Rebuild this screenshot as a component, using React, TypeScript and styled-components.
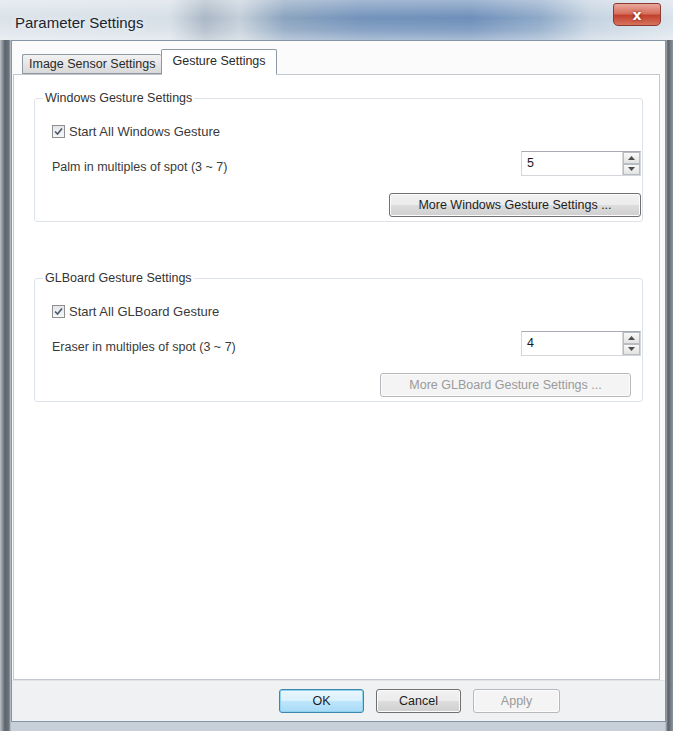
import React from 'react'
import styled, {createGlobalStyle} from 'styled-components'

const GlobalStyle = createGlobalStyle`
  html, body { margin: 0; padding: 0; }
  body {
    font-family: 'Liberation Sans', Arial, sans-serif;
    background: #6f757c;
  }
`;

const Window = styled.div`
  width: 673px;
  height: 731px;
  box-sizing: border-box;
  display: flex;
  flex-direction: column;
  padding: 0 7px 9px 11px;
  background:
    linear-gradient(180deg, rgba(255,255,255,0.35) 0px, rgba(255,255,255,0) 18px, rgba(255,255,255,0.15) 30px, rgba(255,255,255,0.4) 40px) top / 100% 40px no-repeat,
    linear-gradient(90deg, #dbe3ea 0px, #d6dfe7 170px, #aab8c6 205px, #c4cfda 240px, #8aa3bf 285px, #7393bb 360px, #6e8fba 470px, #8ea9c8 540px, #c4d2e0 590px, #d9e2ea 673px) top / 100% 40px no-repeat,
    linear-gradient(90deg, #b9c0c7 0px, #5d636a 5px, #6c737b 9px, #c7d0d9 11px, #c7d0d9 calc(100% - 8px), #5a6068 calc(100% - 5px), #8d949b 100%);
`;

const TitleBar = styled.div`
  flex: none;
  height: 40px;
  display: flex;
  justify-content: space-between;
  align-items: flex-start;
  padding: 0 5px 0 4px;
`;

const TitleText = styled.div`
  margin-top: 14px;
  font-size: 15px;
  line-height: 18px;
  color: #1c2430;
  text-shadow: 0 0 6px rgba(255,255,255,0.9);
`;

const CloseButton = styled.div`
  margin-top: 3px;
  width: 48px;
  height: 23px;
  box-sizing: border-box;
  border: 1px solid #8a3a32;
  border-radius: 3px 3px 5px 5px;
  background: linear-gradient(180deg, #e8a89c 0%, #d7705f 45%, #c2412e 55%, #d6735d 100%);
  display: flex;
  align-items: center;
  justify-content: center;
  color: #fff;
  font-size: 14px;
  font-weight: 700;
  font-family: 'DejaVu Sans', sans-serif;
  text-shadow: 0 0 3px #6b1b10;
`;

const Client = styled.div`
  flex: 1;
  display: flex;
  flex-direction: column;
  border: 1px solid #8595a8;
  background: #eff1f2;
`;

const TabArea = styled.div`
  flex: 1;
  display: flex;
  flex-direction: column;
  padding: 8px 5px 0 1px;
  background: #fbfbfb;
`;

const TabStrip = styled.div`
  display: flex;
  align-items: flex-end;
  padding-left: 9px;
  height: 25px;
  position: relative;
  z-index: 1;
`;

const Tab = styled.div<{$active?: boolean}>`
  box-sizing: border-box;
  height: ${p => (p.$active ? '26px' : '20px')};
  padding: ${p => (p.$active ? '4px 10px 0' : '2px 6px 0')};
  margin-bottom: ${p => (p.$active ? '-1px' : '0')};
  border: 1px solid #8e98a3;
  border-bottom: ${p => (p.$active ? '1px solid #fff' : '1px solid #8e98a3')};
  border-right: ${p => (p.$active ? '1px solid #8e98a3' : 'none')};
  border-radius: 2px 2px 0 0;
  background: ${p => (p.$active ? '#fff' : 'linear-gradient(180deg, #f2f2f2 0%, #e6e6e6 50%, #d9d9d9 100%)')};
  font-size: 12.5px;
  color: #2a2a2a;
  white-space: nowrap;
`;

const Panel = styled.div`
  flex: 1;
  background: #fff;
  border: 1px solid #c3c8ce;
  padding: 16px 16px 0 20px;
  display: flex;
  flex-direction: column;
  gap: 49px;
`;

const Group = styled.fieldset`
  margin: 0;
  padding: 17px 1px 4px 17px;
  border: 1px solid #dde3e8;
  border-radius: 3px;
  display: flex;
  flex-direction: column;
`;

const Legend = styled.legend`
  margin-left: -9px;
  padding: 0 2px;
  font-size: 12.5px;
  line-height: 15px;
  color: #333;
`;

const CheckRow = styled.label`
  display: flex;
  align-items: center;
  gap: 4px;
  height: 16px;
  font-size: 13px;
  color: #3a3a3a;
`;

const CheckBox = styled.span`
  width: 13px;
  height: 13px;
  box-sizing: border-box;
  border: 1px solid #8f8f8f;
  background: linear-gradient(180deg, #e3e6ea 0%, #f7f7f7 100%);
  display: flex;
  align-items: center;
  justify-content: center;
`;

const FieldRow = styled.div`
  margin-top: 12px;
  display: flex;
  align-items: center;
  justify-content: space-between;
  font-size: 12.5px;
  color: #3a3a3a;
`;

const FieldLabel = styled.span`
  padding-top: 6px;
`;

const Spinner = styled.div`
  width: 120px;
  height: 25px;
  box-sizing: border-box;
  display: flex;
  border: 1px solid #d3d6da;
  border-top-color: #a8abb2;
  background: #fff;
`;

const SpinValue = styled.div`
  flex: 1;
  padding: 4px 0 0 5px;
  font-size: 12.5px;
  color: #1a1a1a;
`;

const SpinButtons = styled.div`
  width: 17px;
  display: flex;
  flex-direction: column;
  border-left: 1px solid #d4d6d9;
`;

const SpinArrow = styled.div`
  flex: 1;
  display: flex;
  align-items: center;
  justify-content: center;
  border: 1px solid #b9bcc0;
  background: linear-gradient(180deg, #f8f8f8 0%, #e3e3e3 100%);
`;

const ButtonRow = styled.div<{$inset?: number}>`
  margin-top: 17px;
  display: flex;
  justify-content: flex-end;
  padding-right: ${p => p.$inset || 0}px;
`;

const WinButton = styled.div<{$disabled?: boolean; $default?: boolean; $w: number}>`
  width: ${p => p.$w}px;
  height: 24px;
  box-sizing: border-box;
  border-radius: 3px;
  border: 1px solid ${p => (p.$disabled ? '#b5b9bd' : p.$default ? '#3d87ad' : '#707070')};
  box-shadow: ${p => (p.$default ? 'inset 0 0 0 1px #8fd3ef' : 'inset 0 0 0 1px #fcfcfc')};
  background: ${p => (p.$disabled
    ? '#f4f4f4'
    : p.$default
      ? 'linear-gradient(180deg, #eaf6fd 0%, #d9f0fc 50%, #bee6fd 51%, #a7d9f5 100%)'
      : 'linear-gradient(180deg, #f2f2f2 0%, #ebebeb 50%, #dddddd 51%, #cfcfcf 100%)')};
  color: ${p => (p.$disabled ? '#9a9a9a' : '#1e1e1e')};
  font-size: 12.5px;
  display: flex;
  align-items: center;
  justify-content: center;
  white-space: nowrap;
`;

const Footer = styled.div`
  flex: none;
  height: 41px;
  box-sizing: border-box;
  padding: 8px 105px 0 0;
  display: flex;
  justify-content: flex-end;
  gap: 12px;
  border-top: 1px solid #e2e5e8;
`;

const Check = () => (
  <svg width="9" height="9" viewBox="0 0 9 9">
    <path d="M1 4.5 L3.5 7 L8 1.5" fill="none" stroke="#4b5a6b" strokeWidth="1.6" />
  </svg>
);

const Arrow = ({up}: {up?: boolean}) => (
  <svg width="7" height="4" viewBox="0 0 7 4">
    <path d={up ? 'M0 4 L3.5 0 L7 4 Z' : 'M0 0 L3.5 4 L7 0 Z'} fill="#4d4d4d" />
  </svg>
);

const Spin = ({value}: {value: string}) => (
  <Spinner>
    <SpinValue>{value}</SpinValue>
    <SpinButtons>
      <SpinArrow><Arrow up /></SpinArrow>
      <SpinArrow><Arrow /></SpinArrow>
    </SpinButtons>
  </Spinner>
);

const App = () => {
  return (
    <>
      <GlobalStyle />
      <Window>
        <TitleBar>
          <TitleText>Parameter Settings</TitleText>
          <CloseButton>x</CloseButton>
        </TitleBar>
        <Client>
          <TabArea>
            <TabStrip>
              <Tab>Image Sensor Settings</Tab>
              <Tab $active>Gesture Settings</Tab>
            </TabStrip>
            <Panel>
              <Group>
                <Legend>Windows Gesture Settings</Legend>
                <CheckRow>
                  <CheckBox><Check /></CheckBox>
                  Start All Windows Gesture
                </CheckRow>
                <FieldRow>
                  <FieldLabel>Palm in multiples of spot (3 ~ 7)</FieldLabel>
                  <Spin value="5" />
                </FieldRow>
                <ButtonRow>
                  <WinButton $w={252}>More Windows Gesture Settings ...</WinButton>
                </ButtonRow>
              </Group>
              <Group>
                <Legend>GLBoard Gesture Settings</Legend>
                <CheckRow>
                  <CheckBox><Check /></CheckBox>
                  Start All GLBoard Gesture
                </CheckRow>
                <FieldRow>
                  <FieldLabel>Eraser in multiples of spot (3 ~ 7)</FieldLabel>
                  <Spin value="4" />
                </FieldRow>
                <ButtonRow $inset={10}>
                  <WinButton $w={251} $disabled>More GLBoard Gesture Settings ...</WinButton>
                </ButtonRow>
              </Group>
            </Panel>
          </TabArea>
          <Footer>
            <WinButton $w={85} $default>OK</WinButton>
            <WinButton $w={85}>Cancel</WinButton>
            <WinButton $w={87} $disabled>Apply</WinButton>
          </Footer>
        </Client>
      </Window>
    </>
  )
}

export default App
